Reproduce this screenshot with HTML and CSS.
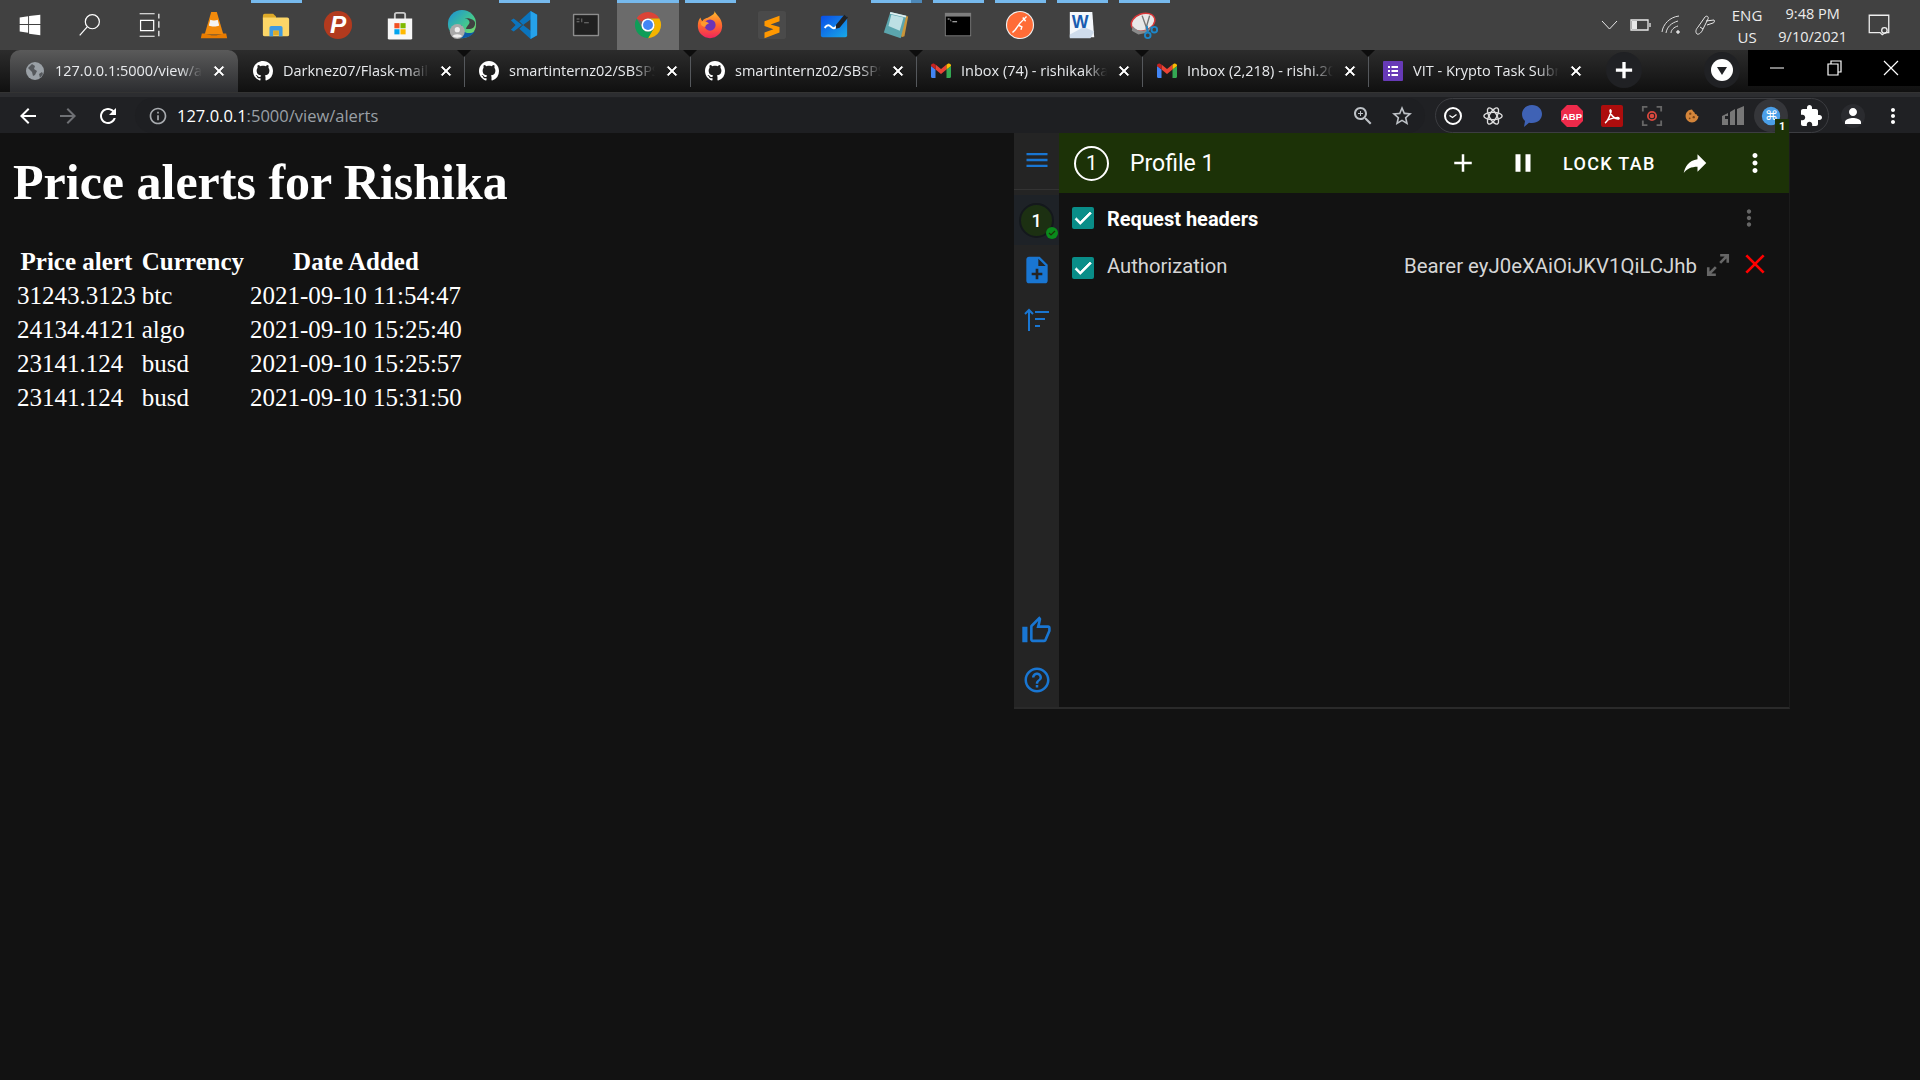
FILE: index.html
```html
<!DOCTYPE html>
<html lang="en">

<head>
    <meta charset="UTF-8">
    <title>Price alerts</title>
    <link rel="stylesheet" href="styles.css">
</head>

<body>
    <svg class="defs" width="0" height="0">
        <symbol id="github" viewBox="0 0 16 16"><path fill="#fff" d="M8 0C3.58 0 0 3.58 0 8c0 3.54 2.29 6.53 5.47 7.59.4.07.55-.17.55-.38 0-.19-.01-.82-.01-1.49-2.01.37-2.53-.49-2.69-.94-.09-.23-.48-.94-.82-1.13-.28-.15-.68-.52-.01-.53.63-.01 1.08.58 1.23.82.72 1.21 1.87.87 2.33.66.07-.52.28-.87.51-1.07-1.78-.2-3.64-.89-3.64-3.95 0-.87.31-1.59.82-2.15-.08-.2-.36-1.02.08-2.12 0 0 .67-.21 2.2.82.64-.18 1.32-.27 2-.27.68 0 1.36.09 2 .27 1.53-1.04 2.2-.82 2.2-.82.44 1.1.16 1.92.08 2.12.51.56.82 1.27.82 2.15 0 3.07-1.87 3.75-3.65 3.95.29.25.54.73.54 1.48 0 1.07-.01 1.93-.01 2.2 0 .21.15.46.55.38A8.013 8.013 0 0016 8c0-4.42-3.58-8-8-8z"/></symbol>
        <symbol id="gmail" viewBox="0 0 20 16">
            <path fill="#4285f4" d="M1 15h3.500V6.500L0 3v10.500a1.500 1.500 0 0 0 1 1.500z"/>
            <path fill="#34a853" d="M15.500 15H19a1.500 1.500 0 0 0 1-1.500V3l-4.500 3.500z"/>
            <path fill="#ea4335" d="M4.500 6.500V1.500L10 6l5.500-4.500v5L10 11z"/>
            <path fill="#c5221f" d="M0 3v-.5C0 .8 2 0 3.200.8l1.300 1v4.700z"/>
            <path fill="#fbbc04" d="M15.500 1.800l1.300-1C18 0 20 .8 20 2.500V3l-4.500 3.500z"/>
        </symbol>
        <symbol id="close" viewBox="0 0 24 24"><path fill="#fff" stroke="#fff" stroke-width="1.200" d="M19 6.410 17.590 5 12 10.590 6.410 5 5 6.410 10.590 12 5 17.590 6.410 19 12 13.410 17.590 19 19 17.590 13.410 12z"/></symbol>
        <symbol id="check" viewBox="0 0 24 24"><path fill="#fff" d="M9 16.170 4.830 12l-1.420 1.410L9 19 21 7l-1.410-1.410z" stroke="#fff" stroke-width="1"/></symbol>
        <symbol id="kebab" viewBox="0 0 24 24"><path d="M12 8c1.100 0 2-.9 2-2s-.9-2-2-2-2 .9-2 2 .9 2 2 2zm0 2c-1.100 0-2 .9-2 2s.9 2 2 2 2-.9 2-2-.9-2-2-2zm0 6c-1.100 0-2 .9-2 2s.9 2 2 2 2-.9 2-2-.9-2-2-2z"/></symbol>
    </svg>

    <!-- windows taskbar -->
    <header class="taskbar">
        <div class="task start"><svg class="ic" viewBox="0 0 32 32"><path fill="#fff" d="M5 8l9-1.300V15H5zM15 6.500L27 5v10H15zM5 16h9v8.300L5 23zM15 16h12v11l-12-1.600z"/></svg></div>
        <div class="task"><svg class="ic" viewBox="0 0 32 32" fill="none" stroke="#fff" stroke-width="1.300"><circle cx="18.500" cy="12.500" r="7.500"/><path d="M13 18L5 27"/></svg></div>
        <div class="task shift"><svg class="ic" viewBox="0 0 32 32" fill="none" stroke="#fff" stroke-width="1.300"><path d="M6 4h16M6 28h16M7 11h14v11H7zM26.500 4v5M26.500 12v7M26.500 22v6"/></svg></div>
        <div class="task"><svg class="ic" viewBox="0 0 32 32"><path fill="#f28a0b" d="M13 2h6l7 24h-20z"/><path fill="#f4f4f4" d="M12 10.500c2 1 6 1 8 0l1.500 6c-3 1.500-8 1.500-11 0z"/><path fill="#e87b00" d="M3 25h3.500c4 2.500 15 2.500 19 0H29l1 5H2z"/></svg></div>
        <div class="task running"><svg class="ic" viewBox="0 0 32 32"><path fill="#dda928" d="M2 6a2 2 0 0 1 2-2h9l3 3v3H2z"/><path fill="#fcd667" d="M2 8h26a2 2 0 0 1 2 2v16a2 2 0 0 1-2 2H4a2 2 0 0 1-2-2z"/><path fill="#3f9ae0" d="M9 28v-9a2 2 0 0 1 2-2h10a2 2 0 0 1 2 2v9h-4v-6h-6v6z"/><path fill="#dda928" d="M13 22h6v5h-6z"/></svg></div>
        <div class="task"><svg class="ic" viewBox="0 0 32 32"><circle cx="16" cy="16" r="15" fill="#b23a1e"/><text x="16" y="25" class="psiphon">P</text></svg></div>
        <div class="task"><svg class="ic" viewBox="0 0 32 32"><path fill="none" stroke="#c9c9c9" stroke-width="2" d="M10.500 10V5a2 2 0 0 1 2-2h7a2 2 0 0 1 2 2v5"/><path fill="#f7f7f7" d="M3 9h26v21a1.500 1.500 0 0 1-1.500 1.500h-23A1.500 1.500 0 0 1 3 30z"/><path fill="#f25022" d="M10 14h5.500v5.500H10z"/><path fill="#7fba00" d="M16.500 14H22v5.500h-5.500z"/><path fill="#00a4ef" d="M10 20.500h5.500V26H10z"/><path fill="#ffb900" d="M16.500 20.500H22V26h-5.500z"/></svg></div>
        <div class="task"><svg class="ic" viewBox="0 0 32 32"><defs><linearGradient id="edge" x1="0" y1="0" x2="1" y2="1"><stop offset="0" stop-color="#1a8fd8"/><stop offset=".6" stop-color="#45c98c"/><stop offset="1" stop-color="#8fe05a"/></linearGradient></defs><circle cx="16" cy="15" r="15" fill="url(#edge)"/><path fill="#0d5aa8" d="M6 28c8 4 20 2 24-6-3 3-8 3-10 2-3-1-5-4-4-8-4 1-8 7-10 12z"/><path fill="#414141" d="M20 20c6 1 10-1 10-6 0-3-5-6-11-5 3 0 5 2 5 4s-2 3-4 7z"/><circle cx="11" cy="23" r="8" fill="#a9a9a9"/><circle cx="11" cy="21" r="2.800" fill="#eee"/><path fill="#eee" d="M5.800 28c1-3 9-3 10.500 0-3 2-8 2-10.500 0z"/></svg></div>
        <div class="task running"><svg class="ic" viewBox="0 0 32 32"><path fill="#0b74bd" d="M2 11l3-2 9 7-9 7-3-2 5-5zM23 1l7 4v22l-7 4-12-11 4-4 8 6V10l-8 6-4-4z"/><path fill="#26a2ea" d="M23 1l7 4v22l-7 4z"/></svg></div>
        <div class="task"><svg class="ic" viewBox="0 0 32 32"><rect x="2" y="4" width="28" height="24" rx="1" fill="#8c8c8c"/><rect x="3.500" y="5.500" width="25" height="21" fill="#202020"/><path fill="#777" d="M6 9h3v1H6zM6 12h3v1H6zM11 9h1v4h-1zM14 13h5v1h-5z"/></svg></div>
        <div class="task active"><svg class="ic" viewBox="0 0 32 32"><path fill="#db4437" d="M16 2a14 14 0 0 1 12.100 7H16a7 7 0 0 0-6.100 3.500L3.900 9A14 14 0 0 1 16 2z"/><path fill="#f4b400" d="M28.100 9A14 14 0 0 1 16 30l6.060-10.500A7 7 0 0 0 16 9z"/><path fill="#0f9d58" d="M3.900 9A14 14 0 0 0 16 30l6.060-10.500a7 7 0 0 1-12.120 0z"/><circle cx="16" cy="16" r="7" fill="#fff"/><circle cx="16" cy="16" r="5.300" fill="#4285f4"/></svg></div>
        <div class="task running"><svg class="ic" viewBox="0 0 32 32"><defs><linearGradient id="fx" x1="0" y1="0" x2="0" y2="1"><stop offset="0" stop-color="#ffbd2e"/><stop offset=".5" stop-color="#ff6b2c"/><stop offset="1" stop-color="#f0235d"/></linearGradient></defs><path fill="url(#fx)" d="M21 1c1 4 8 7 8 16a13 13 0 0 1-26 0c0-4 1-7 3-9 0 2 1 3 2 4 1-3 5-3 8-5 3-2 5-3 5-6z"/><circle cx="16" cy="16" r="6" fill="#6b34b8"/><path fill="#ff9a2e" d="M6 13c3-2 6-1 9 1-2 1-4 2-4 4-3 0-5-2-5-5z"/></svg></div>
        <div class="task"><svg class="ic" viewBox="0 0 32 32"><rect x="1" y="1" width="30" height="30" rx="3" fill="#4a4a4a"/><path fill="#ff9800" d="M8 12l16-6v6l-9.500 3.500L24 18v6L8 30v-6l9.500-3.500L8 17z"/></svg></div>
        <div class="task"><svg class="ic" viewBox="0 0 32 32"><defs><linearGradient id="wb" x1="0" y1="0" x2="1" y2="1"><stop offset="0" stop-color="#0a4de8"/><stop offset="1" stop-color="#18a9e6"/></linearGradient></defs><rect x="2" y="6" width="28" height="23" rx="2" fill="url(#wb)"/><path fill="none" stroke="#fff" stroke-width="2.200" d="M6 19c3-4 5-3 7-1s4 2 6-1"/><path fill="#222" d="M18 16l9-11 4 3-9 11-4 1z"/></svg></div>
        <div class="task running double"><svg class="ic" viewBox="0 0 32 32"><path fill="#c9953a" d="M12 3l17 4-4 21-3 1z"/><path fill="#5ba5ad" d="M10 2l17 4-6 24-18-6z"/><path fill="#bde0e4" d="M11 5l13 3-4 14-12-5z"/><path fill="#dfeef0" d="M10 2l17 4-.5 2-17-4z"/></svg></div>
        <div class="task running"><svg class="ic" viewBox="0 0 32 32"><rect x="2" y="3" width="28" height="25" fill="#7d7d7d"/><rect x="3" y="7" width="26" height="20" fill="#000"/><path fill="#ccc" d="M5 9h2v1H5zM8 9l1 3h-1zM10 12h5v1h-5z"/></svg></div>
        <div class="task running"><svg class="ic" viewBox="0 0 32 32"><circle cx="16" cy="16" r="15" fill="#f0f0f0"/><circle cx="16" cy="16" r="13.800" fill="#ff6c37"/><path fill="none" stroke="#fff" stroke-width="1.500" d="M23 7l-3 3-4 4-5 7-3 3M14 16l4 2-1 3M19 8l3 4"/></svg></div>
        <div class="task running"><svg class="ic" viewBox="0 0 32 32"><path fill="#f4f7fb" d="M3 2h24l2 27H3z"/><path fill="#cfdcec" d="M18 18l11 5-4 7H3v-4z"/><text x="14" y="19" class="word">W</text></svg></div>
        <div class="task running"><svg class="ic" viewBox="0 0 32 32"><ellipse cx="15" cy="13" rx="13" ry="9" transform="rotate(-20 15 13)" fill="#e8e8e8" stroke="#d9383a" stroke-width="1.500"/><path fill="#8a8a8a" d="M4 17c4 6 13 7 18 2l1 1-3 4-10 2-7-4z"/><path fill="none" stroke="#777" stroke-width="1.500" d="M14 6l5 14M22 6l-4 14"/><g fill="none" stroke="#1d87c9" stroke-width="2"><circle cx="27" cy="21" r="3"/><circle cx="20" cy="27" r="3"/><path d="M19 17l1 7M23 18l2 2"/></g></svg></div>

        <div class="tray">
            <svg class="tray-ic" viewBox="0 0 24 24" fill="none" stroke="#e8e8e8" stroke-width="1"><path d="M5 8l7.500 8L20 8"/></svg>
            <svg class="tray-ic" viewBox="0 0 24 24" fill="none" stroke="#e8e8e8" stroke-width="1.300"><path d="M3 7h17v10H3zM22 10v4"/><path fill="#e8e8e8" stroke="none" d="M4 8h5v8H4z"/></svg>
            <svg class="tray-ic" viewBox="0 0 24 24" fill="none" stroke="#ddd" stroke-width="1"><path d="M3 19C4 11 11 4 20 3M7 20c1-6 5-10 12-12M12 20c0-3 3-6 7-7"/><circle cx="19" cy="19" r="1.300" fill="#ddd"/></svg>
            <svg class="tray-ic tray-pen" viewBox="0 0 24 24" fill="none" stroke="#e8e8e8" stroke-width="1"><path d="M4 21c-2-2-1-5 1-7l7-10c2-2 4 0 3 2l-5 10c-1 3-4 6-6 5zM7 14l3 2M13 8l8-1c1 1 0 3-1 3l-6 2"/></svg>
            <div class="lang"><span>ENG</span><span>US</span></div>
            <div class="clock"><span>9:48 PM</span><span>9/10/2021</span></div>
            <svg class="notify" viewBox="0 0 24 24" fill="none" stroke="#eee" stroke-width="1.200"><path d="M3 3h18v16h-3l-3 2-2-2H3z"/><circle cx="17" cy="17" r="2.500"/></svg>
        </div>
    </header>

    <!-- chrome tabs -->
    <nav class="tabstrip">
        <div class="tab current">
            <svg class="fav" viewBox="0 0 20 20"><circle cx="10" cy="10" r="9" fill="#9aa0a6"/><path fill="#55585c" d="M3 7l4-4 3 2-1 3 3 2-2 4-2 1-1-4zM14 13l3-2 1 2-3 4z"/></svg>
            <span class="tab-title">127.0.0.1:5000/view/ale</span>
            <svg class="tab-x"><use href="#close"/></svg>
        </div>
        <div class="tab">
            <svg class="fav"><use href="#github"/></svg>
            <span class="tab-title">Darknez07/Flask-maile</span>
            <svg class="tab-x"><use href="#close"/></svg>
        </div>
        <div class="tab sep">
            <svg class="fav"><use href="#github"/></svg>
            <span class="tab-title">smartinternz02/SBSPS</span>
            <svg class="tab-x"><use href="#close"/></svg>
        </div>
        <div class="tab sep">
            <svg class="fav"><use href="#github"/></svg>
            <span class="tab-title">smartinternz02/SBSPS</span>
            <svg class="tab-x"><use href="#close"/></svg>
        </div>
        <div class="tab sep">
            <svg class="fav"><use href="#gmail"/></svg>
            <span class="tab-title">Inbox (74) - rishikakka</span>
            <svg class="tab-x"><use href="#close"/></svg>
        </div>
        <div class="tab sep">
            <svg class="fav"><use href="#gmail"/></svg>
            <span class="tab-title">Inbox (2,218) - rishi.20</span>
            <svg class="tab-x"><use href="#close"/></svg>
        </div>
        <div class="tab sep">
            <svg class="fav" viewBox="0 0 20 20"><rect width="20" height="20" y="0" rx="1" fill="#673ab7"/><path fill="#fff" d="M5 5h2v2H5zM8.500 5H15v2H8.500zM5 9h2v2H5zM8.500 9H15v2H8.500zM5 13h2v2H5zM8.500 13H15v2H8.500z"/></svg>
            <span class="tab-title">VIT - Krypto Task Subn</span>
            <svg class="tab-x"><use href="#close"/></svg>
        </div>
        <div class="newtab"><svg viewBox="0 0 24 24" width="26" height="26"><path fill="#fff" stroke="#fff" d="M19 13h-6v6h-2v-6H5v-2h6V5h2v6h6v2z"/></svg></div>
        <div class="tabsearch"><svg viewBox="0 0 24 24" width="24" height="24"><circle cx="12" cy="12" r="11" fill="#fff"/><path fill="#202124" d="M7 9h10l-5 8z"/></svg></div>
        <div class="winctl">
            <div class="winbtn"><svg viewBox="0 0 20 20" width="20" height="20"><path stroke="#fff" d="M3 10h14"/></svg></div>
            <div class="winbtn"><svg viewBox="0 0 20 20" width="20" height="20" fill="none" stroke="#fff" stroke-width="1.200"><path d="M4 6h10v11H4zM7 6V3h10v11h-3"/></svg></div>
            <div class="winbtn"><svg viewBox="0 0 20 20" width="20" height="20" fill="none" stroke="#fff" stroke-width="1.200"><path d="M3 3l14 14M17 3L3 17"/></svg></div>
        </div>
    </nav>

    <!-- chrome toolbar -->
    <div class="toolbar">
        <div class="navbtn"><svg viewBox="0 0 24 24" width="24" height="24"><path fill="#fff" d="M20 11H7.830l5.590-5.590L12 4l-8 8 8 8 1.410-1.410L7.830 13H20v-2z"/></svg></div>
        <div class="navbtn"><svg viewBox="0 0 24 24" width="24" height="24"><path fill="#6f7175" d="M12 4l-1.410 1.410L16.170 11H4v2h12.170l-5.580 5.590L12 20l8-8z"/></svg></div>
        <div class="navbtn"><svg viewBox="0 0 24 24" width="24" height="24"><path fill="#fff" d="M17.650 6.350C16.200 4.900 14.210 4 12 4c-4.420 0-7.990 3.580-7.990 8s3.570 8 7.990 8c3.730 0 6.840-2.550 7.730-6h-2.080c-.82 2.330-3.040 4-5.650 4-3.310 0-6-2.690-6-6s2.690-6 6-6c1.660 0 3.140.69 4.220 1.780L13 11h7V4l-2.350 2.350z"/></svg></div>
        <div class="omnibox">
            <svg viewBox="0 0 24 24" width="20" height="20"><path fill="#a8abaf" d="M11 7h2v2h-2zm0 4h2v6h-2zm1-9C6.480 2 2 6.480 2 12s4.480 10 10 10 10-4.480 10-10S17.520 2 12 2zm0 18c-4.410 0-8-3.590-8-8s3.590-8 8-8 8 3.590 8 8-3.590 8-8 8z"/></svg>
            <span class="url"><b>127.0.0.1</b>:5000/view/alerts</span>
            <svg class="omni-zoom" viewBox="0 0 24 24" width="24" height="24"><path fill="#bdc1c6" d="M15.500 14h-.79l-.28-.27C15.410 12.590 16 11.110 16 9.500 16 5.910 13.090 3 9.500 3S3 5.910 3 9.500 5.910 16 9.500 16c1.610 0 3.090-.59 4.230-1.570l.27.28v.79l5 4.990L20.490 19l-4.990-5zm-6 0C7.010 14 5 11.990 5 9.500S7.010 5 9.500 5 14 7.010 14 9.500 11.990 14 9.500 14zm.5-7H9v2H7v1h2v2h1v-2h2V9h-2z"/></svg>
            <svg viewBox="0 0 24 24" width="24" height="24"><path fill="#bdc1c6" d="M22 9.240l-7.190-.62L12 2 9.190 8.630 2 9.240l5.460 4.730L5.820 21 12 17.270 18.180 21l-1.630-7.030L22 9.240zM12 15.400l-3.760 2.270 1-4.280-3.320-2.880 4.380-.38L12 6.100l1.710 4.040 4.380.38-3.320 2.880 1 4.280L12 15.400z"/></svg>
        </div>
        <div class="extpill">
            <div class="ext"><svg viewBox="0 0 20 20" width="20" height="20" fill="none" stroke="#fff"><circle cx="10" cy="10" r="8" stroke-width="2"/><path stroke-width="1.200" d="M6.500 9.500l3 2 4-3"/></svg></div>
            <div class="ext"><svg viewBox="0 0 24 24" width="22" height="22" fill="none" stroke="#ddd" stroke-width="1.500"><ellipse cx="12" cy="12" rx="10" ry="4"/><ellipse cx="12" cy="12" rx="10" ry="4" transform="rotate(60 12 12)"/><ellipse cx="12" cy="12" rx="10" ry="4" transform="rotate(120 12 12)"/></svg></div>
            <div class="ext"><svg viewBox="0 0 24 24" width="24" height="24"><path fill="#3f62b5" d="M12 1c6 0 10 4 10 9s-4 9-10 9c-1 0-2 0-3-.3L4 23l1-6C3 15 2 13 2 10c0-5 4-9 10-9z"/></svg></div>
            <div class="ext"><svg viewBox="0 0 24 24" width="24" height="24"><path fill="#ee2a4a" d="M7 1h10l6 6v10l-6 6H7l-6-6V7z"/><text x="12" y="16" class="abp">ABP</text></svg></div>
            <div class="ext"><svg viewBox="0 0 24 24" width="24" height="24"><rect x="1" y="1" width="22" height="22" rx="2" fill="#ad0d0d"/><path fill="none" stroke="#fff" stroke-width="1.500" d="M5 19c2-1 4-5 6-11 .5-2-1-3-1-1 0 3 4 8 8 8 2 0 1-2-1-1.500-3 .5-7 1-10 3"/></svg></div>
            <div class="ext"><svg viewBox="0 0 24 24" width="22" height="22" fill="none" stroke="#666" stroke-width="2"><path d="M2 7V2h5M17 2h5v5M2 17v5h5M17 22h5v-5"/><circle cx="12" cy="12" r="4.500" stroke="#d8483e" fill="none"/><circle cx="12" cy="12" r="2.500" fill="#d8483e" stroke="none"/></svg></div>
            <div class="ext"><svg viewBox="0 0 24 24" width="14" height="14"><path fill="#d4853a" d="M12 1C6 1 1 6 1 12s5 11 11 11 11-5 11-11c-2 0-3-1-3-3-3 0-4-2-4-4-2 0-3-2-4-4z"/><circle cx="9" cy="8" r="2" fill="#7a4516"/><circle cx="15" cy="14" r="2" fill="#7a4516"/><circle cx="8" cy="16" r="1.500" fill="#7a4516"/></svg></div>
            <div class="ext"><svg class="ext-chart" viewBox="0 0 24 24" width="24" height="24"><path fill="#777" d="M1 12l6-3v3H4v3h3v6H1zM9 8l5-3v16H9zM16 5l7-3v19h-7z"/></svg></div>
            <div class="ext modhead">
                <svg viewBox="0 0 24 24" width="20" height="20"><circle cx="12" cy="12" r="11" fill="#4b9fe8"/></svg>
                <span class="cmd">⌘</span>
                <span class="badge">1</span>
            </div>
            <div class="ext"><svg viewBox="0 0 24 24" width="24" height="24"><path fill="#fff" d="M20.500 11H19V7c0-1.100-.9-2-2-2h-4V3.500C13 2.120 11.880 1 10.500 1S8 2.120 8 3.500V5H4c-1.100 0-1.990.9-1.990 2v3.800H3.500c1.490 0 2.700 1.210 2.700 2.700s-1.210 2.700-2.700 2.700H2V20c0 1.100.9 2 2 2h3.800v-1.500c0-1.490 1.210-2.700 2.700-2.700 1.490 0 2.700 1.210 2.700 2.700V22H17c1.100 0 2-.9 2-2v-4h1.500c1.380 0 2.500-1.120 2.500-2.500S21.880 11 20.500 11z"/></svg></div>
        </div>
        <div class="navbtn avatar"><svg viewBox="0 0 24 24" width="24" height="24"><path fill="#fff" d="M12 12c2.210 0 4-1.790 4-4s-1.790-4-4-4-4 1.790-4 4 1.790 4 4 4zm0 2c-2.670 0-8 1.340-8 4v2h16v-2c0-2.660-5.330-4-8-4z"/></svg></div>
        <div class="navbtn"><svg class="kebab-w" width="24" height="24"><use href="#kebab"/></svg></div>
    </div>

    <main class="page">
        <h1>Price alerts for Rishika</h1>
        <table>
            <tr>
                <th>Price alert</th>
                <th>Currency</th>
                <th>Date Added</th>
            </tr>
            <tr>
                <td>31243.3123</td>
                <td>btc</td>
                <td>2021-09-10 11:54:47</td>
            </tr>
            <tr>
                <td>24134.4121</td>
                <td>algo</td>
                <td>2021-09-10 15:25:40</td>
            </tr>
            <tr>
                <td>23141.124</td>
                <td>busd</td>
                <td>2021-09-10 15:25:57</td>
            </tr>
            <tr>
                <td>23141.124</td>
                <td>busd</td>
                <td>2021-09-10 15:31:50</td>
            </tr>
        </table>

        <!-- extension popup -->
        <section class="popup">
            <aside class="side">
                <div class="side-top"><svg viewBox="0 0 24 24" width="28" height="28"><path fill="#1976d2" d="M3 18h18v-2H3v2zm0-5h18v-2H3v2zm0-7v2h18V6H3z"/></svg></div>
                <div class="side-profile">
                    <div class="side-num">1<svg class="side-ok" viewBox="0 0 12 12"><circle cx="6" cy="6" r="6" fill="#0a8a1c"/><path fill="none" stroke="#1c3207" stroke-width="1.200" d="M3 6l2 2 4-4"/></svg></div>
                </div>
                <div class="side-btn"><svg viewBox="0 0 24 24" width="32" height="32"><path fill="#1976d2" d="M14 2H6c-1.100 0-1.990.9-1.990 2L4 20c0 1.100.89 2 1.990 2H18c1.100 0 2-.9 2-2V8l-6-6zm2 14h-3v3h-2v-3H8v-2h3v-3h2v3h3v2zm-3-7V3.500L18.500 9H13z"/></svg></div>
                <div class="side-btn"><svg viewBox="0 0 28 28" width="28" height="28" fill="none" stroke="#1976d2" stroke-width="2"><path d="M6 25V4M2 8l4-4 4 4M12 6h14M12 13h10M12 20h5"/></svg></div>
                <div class="side-fill"></div>
                <div class="side-btn"><svg viewBox="0 0 24 24" width="31" height="31"><path fill="#1976d2" d="M9 21h9c.83 0 1.540-.5 1.840-1.220l3.020-7.050c.09-.23.14-.47.14-.73v-2c0-1.100-.9-2-2-2h-6.310l.95-4.570.03-.32c0-.41-.17-.79-.44-1.060L14.170 1 7.580 7.590C7.220 7.950 7 8.450 7 9v10c0 1.100.9 2 2 2zM9 9l4.340-4.340L12 10h9v2l-3 7H9V9zM1 9h4v12H1z"/></svg></div>
                <div class="side-btn"><svg viewBox="0 0 24 24" width="30" height="30"><path fill="#1976d2" d="M11 18h2v-2h-2v2zm1-16C6.480 2 2 6.480 2 12s4.480 10 10 10 10-4.480 10-10S17.520 2 12 2zm0 18c-4.410 0-8-3.590-8-8s3.590-8 8-8 8 3.590 8 8-3.590 8-8 8zm0-14c-2.210 0-4 1.790-4 4h2c0-1.100.9-2 2-2s2 .9 2 2c0 2-3 1.750-3 5h2c0-2.250 3-2.500 3-5 0-2.210-1.790-4-4-4z"/></svg></div>
            </aside>
            <div class="body">
                <div class="head">
                    <span class="head-num">1</span>
                    <span class="head-name">Profile 1</span>
                    <svg class="head-plus" viewBox="0 0 24 24" width="30" height="30"><path fill="#fff" d="M19 13h-6v6h-2v-6H5v-2h6V5h2v6h6v2z"/></svg>
                    <svg class="head-pause" viewBox="0 0 24 24" width="30" height="30"><path fill="#fff" d="M6 19h4V5H6v14zm8-14v14h4V5h-4z"/></svg>
                    <span class="head-lock">LOCK TAB</span>
                    <svg class="head-share" viewBox="0 0 24 24" width="30" height="30"><path fill="#fff" d="M14 9V5l7 7-7 7v-4.100c-5 0-8.500 1.600-11 5.100 1-5 4-10 11-11z"/></svg>
                    <svg class="head-more" width="30" height="30"><use href="#kebab"/></svg>
                </div>
                <div class="row">
                    <span class="check"><svg width="22" height="22"><use href="#check"/></svg></span>
                    <span class="row-name">Request headers</span>
                    <svg class="row-more" width="26" height="26"><use href="#kebab"/></svg>
                </div>
                <div class="row">
                    <span class="check"><svg width="22" height="22"><use href="#check"/></svg></span>
                    <span class="hdr-name">Authorization</span>
                    <span class="hdr-value">Bearer eyJ0eXAiOiJKV1QiLCJhb</span>
                    <svg class="hdr-expand" viewBox="0 0 24 24" width="26" height="26" fill="none" stroke="#666" stroke-width="2.400"><path d="M3 21l7-7M3 14v7h7M21 3l-7 7M14 3h7v7"/></svg>
                    <svg class="hdr-del" viewBox="0 0 24 24" width="26" height="26" fill="none" stroke="#f00" stroke-width="2.500"><path d="M4 4l16 16M20 4L4 20"/></svg>
                </div>
            </div>
        </section>
    </main>
</body>

</html>
```

FILE: styles.css
```css
* {
    box-sizing: border-box;
}

body {
    margin: 0;
    height: 100vh;
    overflow: hidden;
    display: flex;
    flex-direction: column;
    background-color: #121212;
    color: #fff;
}

.defs {
    display: block;
    height: 0;
}

svg {
    display: block;
    flex: none;
}

/* taskbar */
.taskbar {
    height: 50px;
    flex: none;
    display: flex;
    margin-left: -3px;
    background-color: #414141;
}

.task {
    width: 62px;
    display: flex;
    align-items: center;
    justify-content: center;
}

.task.start svg {
    margin-left: 4px;
}

.task.shift svg {
    margin-right: 6px;
}

.task.running {
    background: linear-gradient(#76b9ed, #76b9ed) center top / 51px 3px no-repeat;
}

.task.double {
    background: linear-gradient(to right, #76b9ed 40px, #4d88b8 40px) center top / 51px 3px no-repeat;
}

.task.active {
    background: linear-gradient(#76b9ed, #76b9ed) top / 100% 3px no-repeat, #6b6b6b;
}

.ic {
    width: 30px;
    height: 30px;
}

.psiphon {
    font: italic bold 26px "Liberation Sans", sans-serif;
    fill: #fff;
    text-anchor: middle;
}

.word {
    font: bold 19px "Liberation Sans", sans-serif;
    fill: #1a5cb0;
    text-anchor: middle;
}

.tray {
    margin-left: auto;
    display: flex;
    align-items: center;
    color: #ececec;
    font: 15px "Open Sans", sans-serif;
}

.tray-ic {
    width: 24px;
    height: 24px;
    margin-right: 7px;
}

.tray-pen {
    margin-left: 3px;
}

.lang,
.clock {
    display: flex;
    flex-direction: column;
    align-items: center;
    line-height: 23px;
}

.lang {
    margin-left: 8px;
    padding-top: 1px;
    line-height: 22px;
    font-size: 15px;
}

.clock {
    margin-left: 16px;
    font-size: 14.5px;
}

.notify {
    width: 26px;
    height: 26px;
    margin: 0 28px 0 19px;
}

/* tabs */
.tabstrip {
    height: 42px;
    flex: none;
    display: flex;
    padding-left: 10px;
    background: linear-gradient(#2c2c2c, #101010);
}

.tab {
    width: 226px;
    display: flex;
    align-items: center;
    padding: 0 10px 0 15px;
    font: 14.5px "Open Sans", sans-serif;
    color: #e8eaed;
}

.tab.current {
    width: 228px;
    padding-right: 11px;
    background: linear-gradient(#5a5a5a, #2c2d30);
    border-radius: 10px 10px 0 0;
}

.tab.sep {
    position: relative;
    padding-left: 14px;
    border-left: 1px solid #55585c;
    margin: 5px 0;
}

.tab.sep::before {
    content: "";
    position: absolute;
    left: -8px;
    top: -5px;
    border-left: 7px solid transparent;
    border-right: 7px solid transparent;
    border-top: 7px solid #0d0d0d;
}

.fav {
    width: 20px;
    height: 20px;
}

.tab-title {
    flex: 1;
    margin: 0 0 2px 10px;
    white-space: nowrap;
    overflow: hidden;
    -webkit-mask-image: linear-gradient(to right, #000 85%, transparent);
    mask-image: linear-gradient(to right, #000 85%, transparent);
}

.tab-x {
    width: 16px;
    height: 16px;
    margin-left: 9px;
}

.newtab,
.tabsearch {
    width: 36px;
    height: 36px;
    margin: 2px 0;
    border-radius: 50%;
    display: flex;
    align-items: center;
    justify-content: center;
    background-color: #202124;
}

.newtab {
    margin-left: 12px;
}

.tabsearch {
    margin-left: 62px;
}

.winctl {
    margin-left: auto;
    height: 36px;
    padding-right: 1px;
    display: flex;
    background-color: #000;
}

.winbtn {
    width: 57px;
    display: flex;
    align-items: center;
    justify-content: center;
}

/* toolbar */
.toolbar {
    height: 41px;
    flex: none;
    display: flex;
    align-items: flex-start;
    padding: 5px 7px 0 8px;
    border-top: 1px solid #333;
    background-color: #202124;
    box-shadow: inset 0 4px 0 #2c2d30;
}

.navbtn {
    width: 40px;
    height: 35px;
    display: flex;
    align-items: center;
    justify-content: center;
}

.avatar svg {
    background-color: #2a2b2f;
    border-radius: 50%;
}

.kebab-w {
    fill: #fff;
}

.omnibox {
    flex: 1;
    height: 35px;
    margin-left: 7px;
    padding: 0 11px 0 13px;
    display: flex;
    align-items: center;
    border-radius: 18px;
    background-color: #1e1f22;
    font: 16.5px "Open Sans", sans-serif;
    color: #9aa0a6;
}

.url {
    margin-left: 9px;
    flex: 1;
}

.url b {
    font-weight: 400;
    color: #fff;
}

.omni-zoom {
    margin-right: 15px;
}

.extpill {
    width: 394px;
    height: 35px;
    margin: 0 4px 0 10px;
    display: flex;
    gap: 6px;
    border: 1px solid #3c3d41;
    border-radius: 18px;
}

.ext {
    width: 34px;
    height: 33px;
    display: flex;
    align-items: center;
    justify-content: center;
}

.ext-chart {
    margin-left: 4px;
}

.abp {
    font: bold 9.5px "Liberation Sans", sans-serif;
    fill: #fff;
    text-anchor: middle;
}

.modhead {
    position: relative;
    background-color: #35363a;
    border-radius: 50%;
}

.cmd {
    position: absolute;
    font: 13px "DejaVu Sans", sans-serif;
    color: #fff;
}

.badge {
    position: absolute;
    right: -1px;
    top: 20px;
    width: 14px;
    height: 15px;
    z-index: 2;
    background-color: #1c3207;
    color: #fff;
    font: bold 11px/15px Roboto, sans-serif;
    text-align: center;
}

/* page */
.page {
    flex: 1;
    position: relative;
    padding: 20px 12.5px 0;
    background-color: #121212;
    font-family: "Liberation Serif", serif;
}

h1 {
    margin: 0 0 32px 0.5px;
    font-size: 50px;
}

table {
    border-spacing: 3px;
    font-size: 25px;
    line-height: 28px;
}

th,
td {
    padding: 1.5px;
}

/* popup */
.popup {
    position: absolute;
    left: 1014px;
    top: 0;
    width: 776px;
    height: 576px;
    display: flex;
    background-color: #121212;
    border-right: 1px solid #1c1c1c;
    border-bottom: 2px solid #2a2a2a;
    font-family: Roboto, sans-serif;
}

.side {
    width: 45px;
    display: flex;
    flex-direction: column;
    align-items: center;
    padding-bottom: 2px;
    background-color: #242424;
}

.side-top {
    width: 100%;
    height: 57px;
    padding-bottom: 3px;
    border-bottom: 1px solid #333;
    display: flex;
    align-items: center;
    justify-content: center;
}

.side-profile {
    width: 100%;
    height: 50px;
    margin-top: 5px;
    background-color: #1e2227;
    display: flex;
    align-items: center;
    justify-content: center;
}

.side-num {
    width: 35px;
    height: 35px;
    position: relative;
    border-radius: 50%;
    border: 2px solid #14181c;
    background-color: #1c3012;
    font-size: 18px;
    font-weight: 500;
    line-height: 31px;
    text-align: center;
}

.side-ok {
    position: absolute;
    right: -6px;
    bottom: -3px;
    width: 12px;
    height: 12px;
}

.side-btn {
    width: 100%;
    height: 50px;
    display: flex;
    align-items: center;
    justify-content: center;
}

.side-fill {
    flex: 1;
}

.body {
    flex: 1;
    display: flex;
    flex-direction: column;
}

.head {
    height: 60px;
    display: flex;
    align-items: center;
    padding-left: 15px;
    background-color: #1c3207;
}

.head-num {
    width: 35px;
    height: 35px;
    border: 2px solid #fff;
    border-radius: 50%;
    font-size: 20px;
    line-height: 31px;
    text-align: center;
}

.head-name {
    margin-left: 21px;
    width: 318px;
    font-size: 23px;
}

.head-plus {
    margin-right: 30px;
}

.head-lock {
    margin: 0 24px 0 25px;
    font-size: 18px;
    font-weight: 500;
    letter-spacing: 1.3px;
}

.head-more {
    margin-left: 30px;
    fill: #fff;
}

.row {
    height: 50px;
    display: flex;
    align-items: center;
    padding-left: 13px;
    color: #d6d6d6;
    font-size: 20px;
}

.check {
    width: 22px;
    height: 22px;
    border-radius: 2px;
    background-color: #098d88;
}

.row-name {
    margin: 2px 0 0 13px;
    color: #fff;
    font-weight: 700;
}

.row-more {
    margin-left: auto;
    margin-right: 27px;
    fill: #666;
}

.hdr-name {
    margin: 0 0 4px 13px;
    width: 297px;
    font-size: 20.2px;
}

.hdr-value {
    margin-bottom: 4px;
    font-size: 20.4px;
}

.hdr-expand {
    margin: 0 0 6px 8px;
}

.hdr-del {
    margin: 0 0 8px 11px;
}
```
